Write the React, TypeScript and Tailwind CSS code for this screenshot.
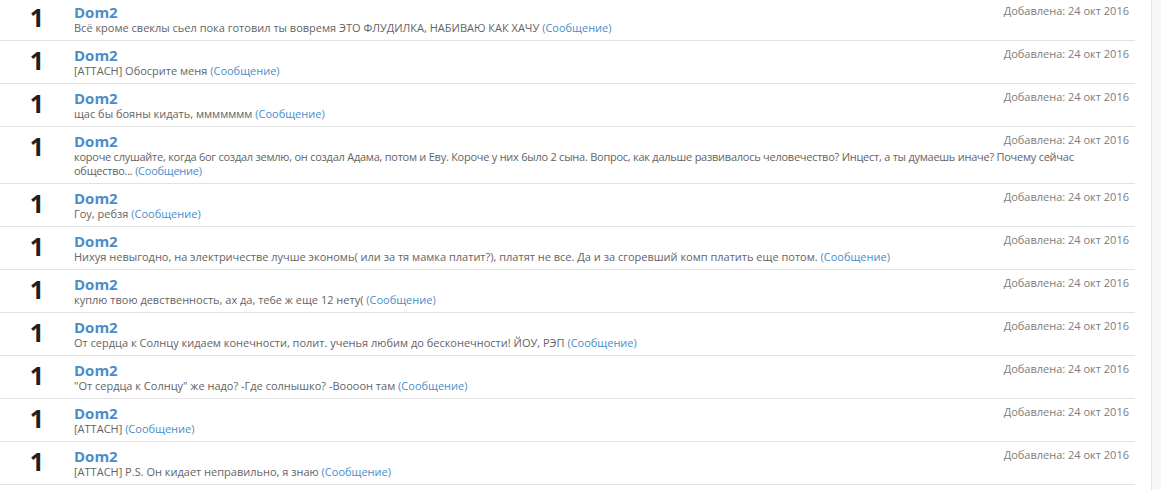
import React from 'react';

type Post = { text: string; tight?: boolean };

const POSTS: Post[] = [
  { text: 'Всё кроме свеклы сьел пока готовил ты вовремя ЭТО ФЛУДИЛКА, НАБИВАЮ КАК ХАЧУ' },
  { text: '[ATTACH] Обосрите меня' },
  { text: 'щас бы бояны кидать, ммммммм' },
  {
    text: 'короче слушайте, когда 6ог создал землю, он создал Адама, потом и Еву. Короче у них 6ыло 2 сына. Вопрос, как дальше развивалось человечество? Инцест, а ты думаешь иначе? Почему сейчас общество...',
    tight: true,
  },
  { text: 'Гоу, ребзя' },
  {
    text: 'Нихуя невыгодно, на электричестве лучше экономь( или за тя мамка платит?), платят не все. Да и за сгоревший комп платить еще потом.',
  },
  { text: 'куплю твою девственность, ах да, те6е ж еще 12 нету(' },
  { text: 'От сердца к Солнцу кидаем конечности, полит. ученья любим до бесконечности! ЙОУ, РЭП' },
  { text: '"От сердца к Солнцу" же надо? -Где солнышко? -Воооон там' },
  { text: '[ATTACH]' },
  { text: '[ATTACH] P.S. Он кидает неправильно, я знаю' },
];

export default function App() {
  return (
    <div className="h-[490px] w-full overflow-hidden bg-white font-['Open_Sans',sans-serif]">
      <div className="flex h-full">
        {/* list */}
        <div className="w-[1151px] shrink-0 pr-4">
          <ol className="-mt-[2px]">
            {POSTS.map((post, i) => (
              <li key={i} className="flex border-b border-[#e2e2e2] pt-[5px] pb-[5px]">
                <div className="mt-[2px] w-[74px] shrink-0 text-center text-[25px] font-bold leading-none text-[#1e1e24]">
                  1
                </div>
                <div className="min-w-0 flex-1 pr-[6px]">
                  <div className="flex items-start justify-between gap-4">
                    <span className="text-[15px] leading-[18px] font-bold text-[#4a8dc8]">Dom2</span>
                    <span className="text-[11px] leading-[15px] whitespace-nowrap text-[#7c7c7c]">
                      Добавлена: 24 окт 2016
                    </span>
                  </div>
                  <p
                    className={
                      post.tight
                        ? 'text-[11px] leading-[14px] tracking-[-0.25px] text-[#646464]'
                        : 'text-[11px] leading-[14px] text-[#646464]'
                    }
                  >
                    {post.text} <span className="text-[#4a8dc8]">(Сообщение)</span>
                  </p>
                </div>
              </li>
            ))}
          </ol>
        </div>
        {/* side */}
        <div className="flex-1 border-l border-[#e6e6e6] bg-[#f7f7f7]" />
      </div>
    </div>
  );
}
